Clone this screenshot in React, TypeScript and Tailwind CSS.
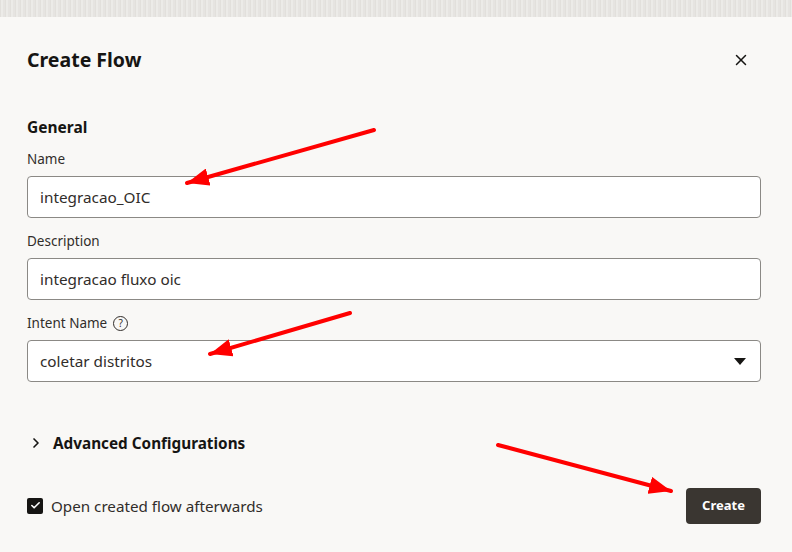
import { X, ChevronRight, Check } from 'lucide-react';

function Field({ label, value, help, select }: { label: string; value: string; help?: boolean; select?: boolean }) {
  return (
    <div className="mt-[14px]">
      <div className="flex h-[18px] items-center gap-[6px] text-[13.5px] text-[#312d2a]">
        <span>{label}</span>
        {help && (
          <span className="flex h-[15px] w-[15px] items-center justify-center rounded-full border border-[#312d2a] text-[10px] leading-none">
            ?
          </span>
        )}
      </div>
      <div className="mt-[8px] flex h-[42px] items-center justify-between rounded-[4px] border border-[#8b8985] bg-white pl-[12px] pr-[14px] text-[15.3px] text-[#312d2a]">
        <span>{value}</span>
        {select && (
          <svg width="12" height="7" viewBox="0 0 12 7">
            <path d="M0 0h12L6 7z" fill="#161513" />
          </svg>
        )}
      </div>
    </div>
  );
}

export default function App() {
  return (
    <div
      className="relative h-[552px] w-[792px] overflow-hidden bg-[#f9f8f6]"
      style={{ fontFamily: '"Noto Sans", "Open Sans", sans-serif' }}
    >
      {/* textured page strip behind the dialog */}
      <div className="h-[17px] bg-[repeating-linear-gradient(90deg,#e2e0dc_0px,#e2e0dc_1px,#ecebe8_1px,#ecebe8_3px,#e6e4e1_3px,#e6e4e1_5px)]" />

      <div className="pl-[27px] pr-[31px]">
        {/* header */}
        <div className="flex h-[86px] items-center justify-between">
          <h1 className="text-[19.5px] font-bold text-[#161513]">Create Flow</h1>
          <X className="mr-[11px] h-[18px] w-[18px] text-[#161513]" strokeWidth={2} />
        </div>

        <h2 className="mt-[12px] text-[15.5px] leading-[24px] font-bold text-[#161513]">General</h2>

        <div className="-mt-[3px]">
          <Field label="Name" value="integracao_OIC" />
        </div>
        <Field label="Description" value="integracao fluxo oic" />
        <Field label="Intent Name" value="coletar distritos" help select />

        <div className="mt-[49px] flex items-center gap-[9px] text-[15.3px] leading-[24px] font-bold text-[#161513]">
          <ChevronRight className="ml-[1px] h-[16px] w-[16px]" strokeWidth={2.5} />
          <span>Advanced Configurations</span>
        </div>

        <div className="mt-[33px] flex items-center justify-between">
          <label className="flex items-center gap-[8px] text-[15.2px] text-[#312d2a]">
            <span className="flex h-[16px] w-[16px] items-center justify-center rounded-[2px] bg-[#161513]">
              <Check className="h-[11px] w-[11px] text-white" strokeWidth={3.5} />
            </span>
            Open created flow afterwards
          </label>
          <button className="h-[36px] w-[75px] rounded-[4px] bg-[#3a3631] text-[13px] font-bold text-white">
            Create
          </button>
        </div>
      </div>

      {/* red annotation arrows */}
      <svg className="pointer-events-none absolute inset-0" width="792" height="552">
        <defs>
          <marker id="head" markerWidth="5.5" markerHeight="4.4" refX="5.5" refY="2.2" orient="auto" markerUnits="strokeWidth">
            <path d="M0 0L5.5 2.2L0 4.4z" fill="#ff0000" />
          </marker>
        </defs>
        <line x1="374" y1="130" x2="187" y2="183" stroke="#ff0000" strokeWidth="4" strokeLinecap="round" markerEnd="url(#head)" />
        <line x1="350" y1="313" x2="210" y2="354" stroke="#ff0000" strokeWidth="4" strokeLinecap="round" markerEnd="url(#head)" />
        <line x1="498" y1="445" x2="671" y2="491" stroke="#ff0000" strokeWidth="4" strokeLinecap="round" markerEnd="url(#head)" />
      </svg>
    </div>
  );
}
